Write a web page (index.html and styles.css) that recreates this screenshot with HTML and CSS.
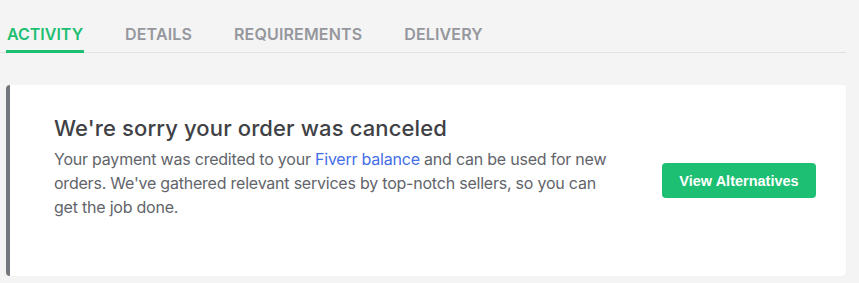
FILE: index.html
```html
<!DOCTYPE html>
<html lang="en">
<head>
<meta charset="utf-8">
<title>Order canceled</title>
<link rel="stylesheet" href="styles.css">
</head>
<body>
<nav class="tabs">
  <a class="tab tab-active">ACTIVITY</a>
  <a class="tab">DETAILS</a>
  <a class="tab">REQUIREMENTS</a>
  <a class="tab">DELIVERY</a>
</nav>
<section class="card">
  <div class="card-text">
    <h2 class="card-title">We're sorry your order was canceled</h2>
    <p class="card-body">Your payment was credited to your <a class="link">Fiverr balance</a> and can be used for new orders. We've gathered relevant services by top-notch sellers, so you can<br>get the job done.</p>
  </div>
  <button class="btn">View Alternatives</button>
</section>
</body>
</html>
```
FILE: styles.css
```css
html, body {
  margin: 0;
  padding: 0;
  background: #f4f4f4;
  font-family: Inter, "Noto Sans", sans-serif;
}
body {
  padding: 0 13px 0 6px;
}
.tabs {
  display: flex;
  gap: 40px;
  border-bottom: 1px solid #e2e2e2;
  padding-top: 22px;
  margin-left: -6px;
  padding-left: 6px;
}
.tab {
  font-size: 16px;
  font-weight: 600;
  line-height: 24px;
  color: #95979d;
  padding: 0 1px 4px;
  border-bottom: 3px solid transparent;
  margin-bottom: -1px;
  letter-spacing: 0.15px;
}
.tab-active {
  color: #1dbf73;
  border-bottom-color: #1dbf73;
  letter-spacing: 0;
}
.card {
  margin-top: 32px;
  background: #fff;
  border-left: 4px solid #74767e;
  border-radius: 4px;
  box-shadow: 0 1px 2px rgba(0,0,0,0.06);
  display: flex;
  align-items: center;
  padding: 28px 30px 52px 44px;
  min-height: 111px;
}
.card-text {
  flex: 0 1 590px;
  align-self: flex-start;
}
.card-title {
  margin: 0;
  font-size: 22px;
  font-weight: 500;
  line-height: 30px;
  color: #404145;
  letter-spacing: 0.12px;
}
.card-body {
  margin: 4px 0 0;
  font-size: 16px;
  line-height: 24px;
  color: #62646a;
  letter-spacing: -0.22px;
}
.link {
  color: #446ee7;
}
.btn {
  margin-left: auto;
  font-family: "Liberation Sans", Arial, sans-serif;
  font-weight: 700;
  font-size: 14.5px;
  color: #fff;
  background: #1dbf73;
  border: none;
  border-radius: 4px;
  width: 154px;
  height: 35px;
  padding: 0;
  margin-top: 24px;
}
```
